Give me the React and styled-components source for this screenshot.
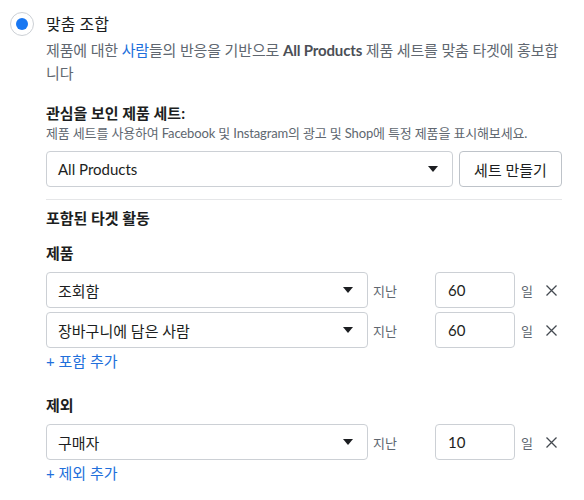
import React from "react";
import styled, { createGlobalStyle } from "styled-components";

const GlobalStyle = createGlobalStyle`
  html, body { margin: 0; padding: 0; background: #fff; }
  body {
    font-family: Lato, "Noto Sans CJK KR", "Noto Sans", sans-serif;
    color: #1c1e21;
    -webkit-font-smoothing: antialiased;
  }
  * { box-sizing: border-box; }
`;

const Page = styled.div`
  width: 584px;
  padding: 12px 22px 0 10px;
  display: flex;
  gap: 12px;
  align-items: flex-start;
`;

const Radio = styled.span`
  flex: none;
  width: 24px;
  height: 24px;
  border-radius: 50%;
  border: 1px solid #ccd0d5;
  display: flex;
  align-items: center;
  justify-content: center;
  &::after {
    content: "";
    width: 12px;
    height: 12px;
    border-radius: 50%;
    background: #1877f2;
  }
`;

const Content = styled.div`
  flex: 1;
  display: flex;
  flex-direction: column;
`;

const Title = styled.div`
  font-size: 16px;
  line-height: 24px;
  color: #1c1e21;
`;

const Desc = styled.div`
  margin-top: 3px;
  font-size: 15px;
  line-height: 23px;
  letter-spacing: -0.15px;
  color: #606770;
`;

const Link = styled.span`
  color: #216fdb;
`;

const Strong = styled.b`
  font-weight: 700;
  color: #4b4f56;
`;

const Heading = styled.div`
  margin-top: ${(p) => p.$mt}px;
  font-size: 15px;
  line-height: 20px;
  font-weight: 700;
  color: #1c1e21;
`;

const SubText = styled.div`
  margin-top: 2px;
  font-size: 13px;
  line-height: 16px;
  letter-spacing: -0.15px;
  color: #606770;
  white-space: nowrap;
`;

const SetRow = styled.div`
  margin-top: 10px;
  display: flex;
  gap: 6px;
`;

const Select = styled.div`
  width: ${(p) => p.$w}px;
  height: 36px;
  border: 1px solid #ccd0d5;
  border-radius: 4px;
  background: #fff;
  display: flex;
  align-items: center;
  justify-content: space-between;
  padding: 0 14px 0 11px;
  font-size: 15px;
  color: #1c1e21;
`;

const Caret = styled.span`
  width: 0;
  height: 0;
  border-left: 5.5px solid transparent;
  border-right: 5.5px solid transparent;
  border-top: 6px solid #1c1e21;
`;

const Button = styled.div`
  width: 103px;
  height: 36px;
  border: 1px solid #bec3c9;
  border-radius: 4px;
  background: #fff;
  display: flex;
  align-items: center;
  justify-content: center;
  font-size: 15px;
  color: #1c1e21;
`;

const Divider = styled.hr`
  margin: 12px 0 0;
  border: none;
  border-top: 1px solid #e5e6e8;
  height: 0;
`;

const Rows = styled.div`
  margin-top: 9px;
  display: flex;
  flex-direction: column;
  gap: 4px;
`;

const Row = styled.div`
  display: flex;
  align-items: center;
  height: 36px;
`;

const Label = styled.span`
  width: 67px;
  padding-left: 5px;
  font-size: 13px;
  color: #606770;
`;

const Input = styled.div`
  width: 80px;
  height: 36px;
  border: 1px solid #ccd0d5;
  border-radius: 4px;
  display: flex;
  align-items: center;
  padding-left: 12px;
  font-size: 15px;
  color: #1c1e21;
`;

const Unit = styled.span`
  margin-left: 6px;
  font-size: 13px;
  color: #606770;
  width: 13px;
`;

const Remove = styled.span`
  margin-left: 12px;
  display: flex;
  align-items: center;
`;

const AddLink = styled.div`
  margin-top: 5px;
  font-size: 15px;
  line-height: 16px;
  color: #216fdb;
`;

const XIcon = () => (
  <svg width="11" height="11" viewBox="0 0 11 11">
    <path d="M0.5 0.5L10.5 10.5M10.5 0.5L0.5 10.5" stroke="#444950" strokeWidth="1.3" fill="none" />
  </svg>
);

const ActivityRow = ({ name, days }) => (
  <Row>
    <Select $w={322}>
      <span>{name}</span>
      <Caret />
    </Select>
    <Label>지난</Label>
    <Input>{days}</Input>
    <Unit>일</Unit>
    <Remove>
      <XIcon />
    </Remove>
  </Row>
);

export default function App() {
  return (
    <>
      <GlobalStyle />
      <Page>
        <Radio />
        <Content>
          <Title>맞춤 조합</Title>
          <Desc>
            제품에 대한 <Link>사람</Link>들의 반응을 기반으로 <Strong>All Products</Strong> 제품 세트를 맞춤 타겟에 홍보합니다
          </Desc>
          <Heading $mt={18}>관심을 보인 제품 세트:</Heading>
          <SubText>제품 세트를 사용하여 Facebook 및 Instagram의 광고 및 Shop에 특정 제품을 표시해보세요.</SubText>
          <SetRow>
            <Select $w={407}>
              <span>All Products</span>
              <Caret />
            </Select>
            <Button>세트 만들기</Button>
          </SetRow>
          <Divider />
          <Heading $mt={8}>포함된 타겟 활동</Heading>
          <Heading $mt={15}>제품</Heading>
          <Rows>
            <ActivityRow name="조회함" days="60" />
            <ActivityRow name="장바구니에 담은 사람" days="60" />
          </Rows>
          <AddLink>+ 포함 추가</AddLink>
          <Heading $mt={26}>제외</Heading>
          <Rows>
            <ActivityRow name="구매자" days="10" />
          </Rows>
          <AddLink>+ 제외 추가</AddLink>
        </Content>
      </Page>
    </>
  );
}
